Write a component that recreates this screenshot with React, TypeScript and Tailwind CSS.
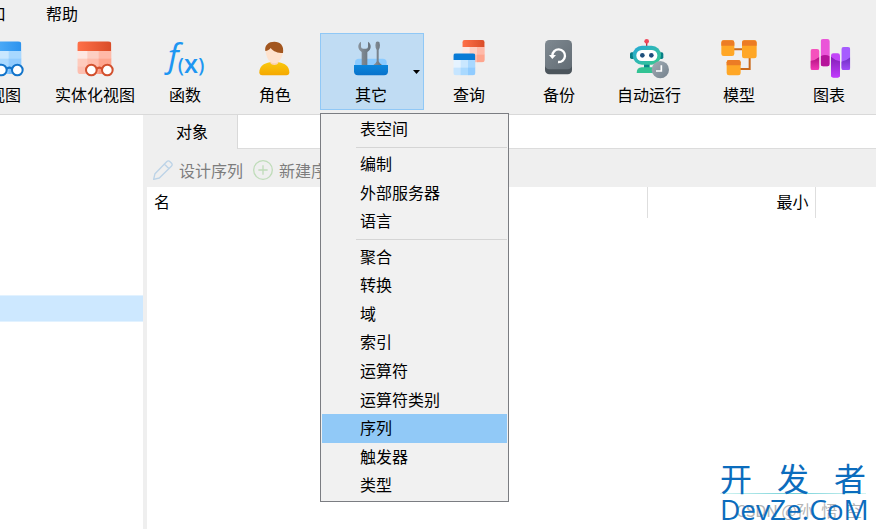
import React, { useState } from 'react';

interface Tool {
    label: string;
    icon: React.ReactNode;
}

const Icon: React.FC<{ children: React.ReactNode }> = ({ children }) => (
    <svg className="w-11 h-10 shrink-0" viewBox="0 0 132 120" fill="none" aria-hidden="true">
        {children}
    </svg>
);

interface ViewIconProps {
    id: string;
    dark: string;
    head: [string, string];
    cells: string[];
}

const ViewIcon: React.FC<ViewIconProps> = ({ id, dark, head, cells }) => (
    <Icon>
        <defs>
            <linearGradient id={id}>
                <stop stopColor={head[0]} />
                <stop offset="1" stopColor={head[1]} />
            </linearGradient>
            <clipPath id={`${id}-clip`}>
                <rect x="13" y="7" width="102" height="98" rx="10" />
            </clipPath>
        </defs>
        <g clipPath={`url(#${id}-clip)`}>
            {cells.map((color, i) => (
                <rect key={i} x={[13, 43, 77][i % 3]} y={36 + Math.floor(i / 3) * 23} width="40" height="24" fill={color} />
            ))}
            <rect x="13" y="7" width="102" height="29" fill={`url(#${id})`} />
        </g>
        <path d="M70 90q9-8 18 0" stroke={dark} strokeWidth="6" />
        <circle cx="55" cy="93" r="16" fill="#fff" stroke={dark} strokeWidth="6" />
        <circle cx="103" cy="93" r="16" fill="#fff" stroke={dark} strokeWidth="6" />
    </Icon>
);

const FunctionIcon = () => (
    <Icon>
        <g fill="#1d96f2" fontFamily="'Open Sans', sans-serif">
            <text x="4" y="84" fontSize="104" fontStyle="italic">ƒ</text>
            <text x="44" y="98" fontSize="58" fontWeight="600">(</text>
            <text x="63" y="101" fontSize="76" fontWeight="600">x</text>
            <text x="106" y="98" fontSize="58" fontWeight="600">)</text>
        </g>
    </Icon>
);

const RoleIcon = () => (
    <Icon>
        <defs>
            <linearGradient id="shirt" x1="0" y1="0" x2="0" y2="1">
                <stop stopColor="#f9c80e" />
                <stop offset="1" stopColor="#f5a800" />
            </linearGradient>
        </defs>
        <path d="M19 100c0-17 13-27 32-30h26c19 3 32 13 32 30 0 6-3 9-9 9H28c-6 0-9-3-9-9z" fill="url(#shirt)" />
        <path d="M52 62h24v10c-3 8-21 8-24 0z" fill="#fbd3b4" />
        <path d="M38 34c0-16 10-24 26-24s26 8 26 24c0 22-12 39-26 39S38 56 38 34z" fill="#fee2cd" />
        <path d="M37 36C34 18 47 8 64 8s30 11 26 34c-16 0-29-4-37-15-4 6-9 8-16 9z" fill="#a2561f" />
    </Icon>
);

const OthersIcon = () => (
    <Icon>
        <defs>
            <linearGradient id="steel">
                <stop stopColor="#8a949d" />
                <stop offset="1" stopColor="#66717a" />
            </linearGradient>
            <linearGradient id="tray" x1="0" y1="0" x2="0" y2="1">
                <stop stopColor="#0a86dc" />
                <stop offset="1" stopColor="#0872cb" />
            </linearGradient>
        </defs>
        <path d="M18 80V70q0-11 12-11h71q12 0 12 11v10z" fill="#8bcbff" />
        <path d="M36 8c-6 4-9 10-8 17 1 7 5 11 10 14v40h17V39c6-3 9-8 10-14 1-7-2-13-8-17v15q0 6-6 6h-8q-7 0-7-6z" fill="url(#steel)" />
        <path d="M81 9q5-3 10 0 3 9 1 17l-3 7v34q2 6 10 11H73q8-5 10-11V33l-3-7q-2-8 1-17z" fill="url(#steel)" />
        <path d="M15 78h102v19q0 12-12 12H27q-12 0-12-12z" fill="url(#tray)" />
    </Icon>
);

const redCells = ['#fde7e2', '#fdcfc3', '#ffb9a8', '#fecbbd', '#ffbbaa', '#fea58e'];
const blueCells = ['#e5f3ff', '#c9e7ff', '#a8d8ff', '#c6e5ff', '#a9d9ff', '#91ccff'];

const QueryIcon = () => (
    <Icon>
        <defs>
            <linearGradient id="query-red">
                <stop stopColor="#ff7048" />
                <stop offset="1" stopColor="#d94c28" />
            </linearGradient>
            <clipPath id="query-back"><rect x="46" y="3" width="67" height="67" rx="7" /></clipPath>
            <clipPath id="query-front"><rect x="19" y="43" width="66" height="66" rx="7" /></clipPath>
        </defs>
        <g clipPath="url(#query-back)">
            {redCells.map((color, i) => (
                <rect key={i} x={46 + (i % 3) * 22} y={24 + Math.floor(i / 3) * 23} width="24" height="24" fill={color} />
            ))}
            <rect x="46" y="3" width="67" height="21" fill="url(#query-red)" />
        </g>
        <g clipPath="url(#query-front)">
            {blueCells.map((color, i) => (
                <rect key={i} x={19 + (i % 3) * 22} y={63 + Math.floor(i / 3) * 23} width="23" height="24" fill={color} />
            ))}
            <rect x="19" y="43" width="66" height="20" fill="#087bd6" />
        </g>
    </Icon>
);

const BackupIcon = () => (
    <Icon>
        <defs>
            <linearGradient id="disk" x1="0" y1="0" x2="1" y2="1">
                <stop stopColor="#7f8991" />
                <stop offset="1" stopColor="#626c74" />
            </linearGradient>
        </defs>
        <rect x="24" y="20" width="81" height="86" rx="13" fill="#4c555c" />
        <rect x="24" y="3" width="81" height="88" rx="13" fill="url(#disk)" />
        <path d="M46 50a19 19 0 1 1 17 19" stroke="#fff" strokeWidth="7" />
        <path d="M36 48h21L46 60z" fill="#fff" />
    </Icon>
);

const RobotIcon = () => (
    <Icon>
        <defs>
            <linearGradient id="robot" x1="0" y1="0" x2="1" y2="1">
                <stop stopColor="#27a9d8" />
                <stop offset="1" stopColor="#38c98c" />
            </linearGradient>
            <linearGradient id="clock" x1="0" y1="0" x2="1" y2="1">
                <stop stopColor="#a2adb6" />
                <stop offset="1" stopColor="#74818c" />
            </linearGradient>
        </defs>
        <path d="M59 8v14" stroke="#c52b3d" strokeWidth="4" />
        <circle cx="59" cy="7" r="7" fill="#f0475a" />
        <rect x="9" y="40" width="14" height="20" rx="5" fill="#087f86" />
        <rect x="96" y="40" width="13" height="20" rx="5" fill="#087f86" />
        <rect x="51" y="74" width="17" height="14" fill="#098888" />
        <path d="M29 102q0-16 15-17h30q15 1 15 17z" fill="#32c394" />
        <rect x="17" y="20" width="85" height="57" rx="28" fill="url(#robot)" />
        <rect x="28" y="33" width="63" height="33" rx="16" fill="#fff" />
        <circle cx="46" cy="49" r="7" fill="#1d4f7c" />
        <circle cx="73" cy="49" r="7" fill="#1d4f7c" />
        <circle cx="100" cy="92" r="26" fill="url(#clock)" />
        <path d="M103 79v17H87" stroke="#fff" strokeWidth="5" />
    </Icon>
);

const ModelIcon = () => (
    <Icon>
        <path d="M50 31h28M98 55v35H69" stroke="#c96a1c" strokeWidth="6" />
        <rect x="13" y="4" width="39" height="47" rx="7" fill="#ffa726" />
        <path d="M13 20V11q0-7 7-7h25q7 0 7 7v9z" fill="#ec7c25" />
        <rect x="75" y="4" width="44" height="54" rx="7" fill="#ffa726" />
        <path d="M75 20V11q0-7 7-7h30q7 0 7 7v9z" fill="#ec7c25" />
        <rect x="29" y="63" width="42" height="46" rx="7" fill="#ffa726" />
        <path d="M29 79v-9q0-7 7-7h28q7 0 7 7v9z" fill="#ec7c25" />
    </Icon>
);

const ChartIcon = () => (
    <Icon>
        <defs>
            <clipPath id="bars">
                <rect x="10" y="30" width="27" height="63" rx="7" />
                <rect x="41" y="0" width="27" height="82" rx="7" />
                <rect x="72" y="43" width="27" height="73" rx="7" />
                <rect x="103" y="24" width="27" height="69" rx="7" />
            </clipPath>
            <linearGradient id="bar-pink" x1="0" y1="0" x2="0" y2="1">
                <stop stopColor="#b01080" />
                <stop offset="1" stopColor="#f438b8" />
            </linearGradient>
            <linearGradient id="bar-purple" x1="0" y1="0" x2="0" y2="1">
                <stop stopColor="#8320b4" />
                <stop offset="1" stopColor="#c23bff" />
            </linearGradient>
            <linearGradient id="bar-violet" x1="0" y1="0" x2="0" y2="1">
                <stop stopColor="#6f2fc0" />
                <stop offset="1" stopColor="#a04cf8" />
            </linearGradient>
        </defs>
        <g clipPath="url(#bars)">
            <path d="M10 0h28v120H10z" fill="#f552bd" />
            <path d="M41 0h28v120H41z" fill="#ea55d8" />
            <path d="M72 0h28v120H72z" fill="#c244f8" />
            <path d="M103 0h28v120h-28z" fill="#a65cff" />
            <path d="M10 66q15-2 27-12v40H10z" fill="url(#bar-pink)" />
            <path d="M41 52q13-8 27 0v32H41z" fill="#b5149a" />
            <path d="M72 53q13 12 27 14v50H72z" fill="url(#bar-purple)" />
            <path d="M103 68q15-2 27-13v38h-27z" fill="url(#bar-violet)" />
        </g>
    </Icon>
);

const toolsBefore: Tool[] = [
    { label: '视图', icon: <ViewIcon id="view" dark="#1274ca" head={['#5bb5fb', '#2c93ee']} cells={[...blueCells, '#a9d9ff', '#91ccff', '#78bdfb']} /> },
    { label: '实体化视图', icon: <ViewIcon id="mview" dark="#d2502e" head={['#ff7048', '#d94c28']} cells={[...redCells, '#fdbfb0', '#ffa892', '#fc9880']} /> },
    { label: '函数', icon: <FunctionIcon /> },
    { label: '角色', icon: <RoleIcon /> },
];

const toolsAfter: Tool[] = [
    { label: '查询', icon: <QueryIcon /> },
    { label: '备份', icon: <BackupIcon /> },
    { label: '自动运行', icon: <RobotIcon /> },
    { label: '模型', icon: <ModelIcon /> },
    { label: '图表', icon: <ChartIcon /> },
];

const menuGroups = [
    ['表空间'],
    ['编制', '外部服务器', '语言'],
    ['聚合', '转换', '域', '索引', '运算符', '运算符类别', '序列', '触发器', '类型'],
];

const ToolButton: React.FC<{ tool: Tool }> = ({ tool }) => (
    <button type="button" className="w-[90px] h-[77px] shrink-0 flex flex-col items-center gap-[3px] pt-[5px] border border-transparent whitespace-nowrap hover:bg-[#dbebf8]">
        {tool.icon}
        <span className="leading-6">{tool.label}</span>
    </button>
);

const OthersMenu: React.FC<{ selected: string; onSelect: (name: string) => void }> = ({ selected, onSelect }) => (
    <div role="menu" className="absolute z-10 left-0 top-20 w-[189px] h-[389px] flex flex-col p-px border border-[#7b7d82] bg-[#f1f1f1]">
        {menuGroups.map((group, i) => (
            <React.Fragment key={i}>
                {i > 0 && (
                    <div role="separator" className="h-[7px] shrink-0 flex items-center pl-[34px]">
                        <div className="h-px w-full bg-[#d5d5d5]" />
                    </div>
                )}
                {group.map((name) => (
                    <button
                        key={name}
                        type="button"
                        role="menuitem"
                        onClick={() => onSelect(name)}
                        className={`flex-1 flex items-center pl-[38px] pb-[3px] leading-6 text-left ${name === selected ? 'bg-[#91c9f7]' : 'hover:bg-[#dbebf8]'}`}
                    >
                        {name}
                    </button>
                ))}
            </React.Fragment>
        ))}
    </div>
);

const Watermark = () => (
    <div className="absolute right-[10px] bottom-1 w-[146px] text-[#0b6cbd] pointer-events-none">
        <div className="flex justify-between text-[32px] leading-8">
            <span>开</span>
            <span>发</span>
            <span>者</span>
        </div>
        <div className="h-px bg-linear-to-r from-[#d5f5f2] via-[#6fd0d8] to-[#d5f5f2]" />
        <div className="relative">
            <div className="absolute left-4 right-1 top-1 flex justify-between text-base leading-6 text-[#b5b5b5] whitespace-nowrap">
                <span>CSDN @孙</span>
                <span>悟</span>
                <span>空</span>
            </div>
            <span className="relative font-['Open_Sans',sans-serif] text-[28px] leading-[30px]">DevZe.CoM</span>
        </div>
    </div>
);

const App: React.FC = () => {
    const [selected, setSelected] = useState('序列');
    const [menuOpen, setMenuOpen] = useState(true);

    return (
        <div className="relative min-h-screen flex flex-col overflow-hidden bg-white text-base text-black font-['Noto_Sans_CJK_SC',sans-serif]">
            <header className="bg-[#efefef] border-b border-[#d9d9d9]">
                <nav className="flex h-7 -ml-[46px]">
                    <button type="button" className="px-5 pb-0.5">窗口</button>
                    <button type="button" className="px-5 pb-0.5">帮助</button>
                </nav>
                <div className="flex pt-[5px] pb-1 -ml-10">
                    {toolsBefore.map((tool) => <ToolButton key={tool.label} tool={tool} />)}
                    <div className="relative shrink-0">
                        <button
                            type="button"
                            aria-expanded={menuOpen}
                            onClick={() => setMenuOpen(!menuOpen)}
                            className="w-[104px] h-[77px] flex items-start justify-end gap-5 pt-[5px] pr-[3px] border border-[#90c8f6] bg-[#c0dcf3]"
                        >
                            <span className="flex flex-col items-center gap-[3px]">
                                <OthersIcon />
                                <span className="leading-6">其它</span>
                            </span>
                            <svg className="w-[7px] h-1 mt-[31px]" viewBox="0 0 7 4" aria-hidden="true">
                                <path d="M0 0h7L3.5 4z" fill="#000" />
                            </svg>
                        </button>
                        {menuOpen && <OthersMenu selected={selected} onSelect={setSelected} />}
                    </div>
                    {toolsAfter.map((tool) => <ToolButton key={tool.label} tool={tool} />)}
                </div>
            </header>

            <div className="flex-1 flex">
                <aside className="w-[143px] shrink-0 pt-[180px]">
                    <div className="h-[27px] bg-[#cde8ff] border-y border-[#e2f2ff]" />
                </aside>
                <div className="w-1 shrink-0 bg-[#efefef]" />
                <main className="flex-1 min-w-0">
                    <div role="tablist" className="flex h-[34px]">
                        <button type="button" role="tab" aria-selected="true" className="w-[91px] pb-[3px] bg-[#efefef] border-r border-[#d9d9d9]">对象</button>
                        <div className="flex-1 border-b border-[#dcdcdc]" />
                    </div>
                    <div className="flex items-center gap-[9px] h-[38px] px-[5px] pt-1 bg-[#efefef] text-[#7d7d7d] whitespace-nowrap">
                        <button type="button" className="flex items-center gap-[5px]">
                            <svg className="w-[22px] h-[22px]" viewBox="0 0 66 66" fill="none" stroke="#bcd3e7" strokeWidth="4" strokeLinejoin="round" aria-hidden="true">
                                <path d="M5 61l4-17L44 8q5-5 10 0l4 4q5 5 0 10L22 57zM37 15l14 14" />
                            </svg>
                            <span>设计序列</span>
                        </button>
                        <button type="button" className="flex items-center gap-[5px]">
                            <svg className="w-[22px] h-[22px]" viewBox="0 0 66 66" fill="none" stroke="#bfdcb9" strokeWidth="4" aria-hidden="true">
                                <circle cx="33" cy="33" r="28" />
                                <path d="M33 19v28M19 33h28" />
                            </svg>
                            <span>新建序列</span>
                        </button>
                    </div>
                    <table className="w-full table-fixed border-collapse">
                        <thead>
                            <tr className="h-[31px]">
                                <th className="w-[500px] p-0 pb-[3px] pl-[7px] text-left font-normal border-r border-[#dedede]">名</th>
                                <th className="w-[168px] p-0 pb-[3px] pr-[6px] text-right font-normal border-r border-[#dedede]">最小</th>
                                <td />
                            </tr>
                        </thead>
                    </table>
                </main>
            </div>
            <Watermark />
        </div>
    );
};

export default App;
